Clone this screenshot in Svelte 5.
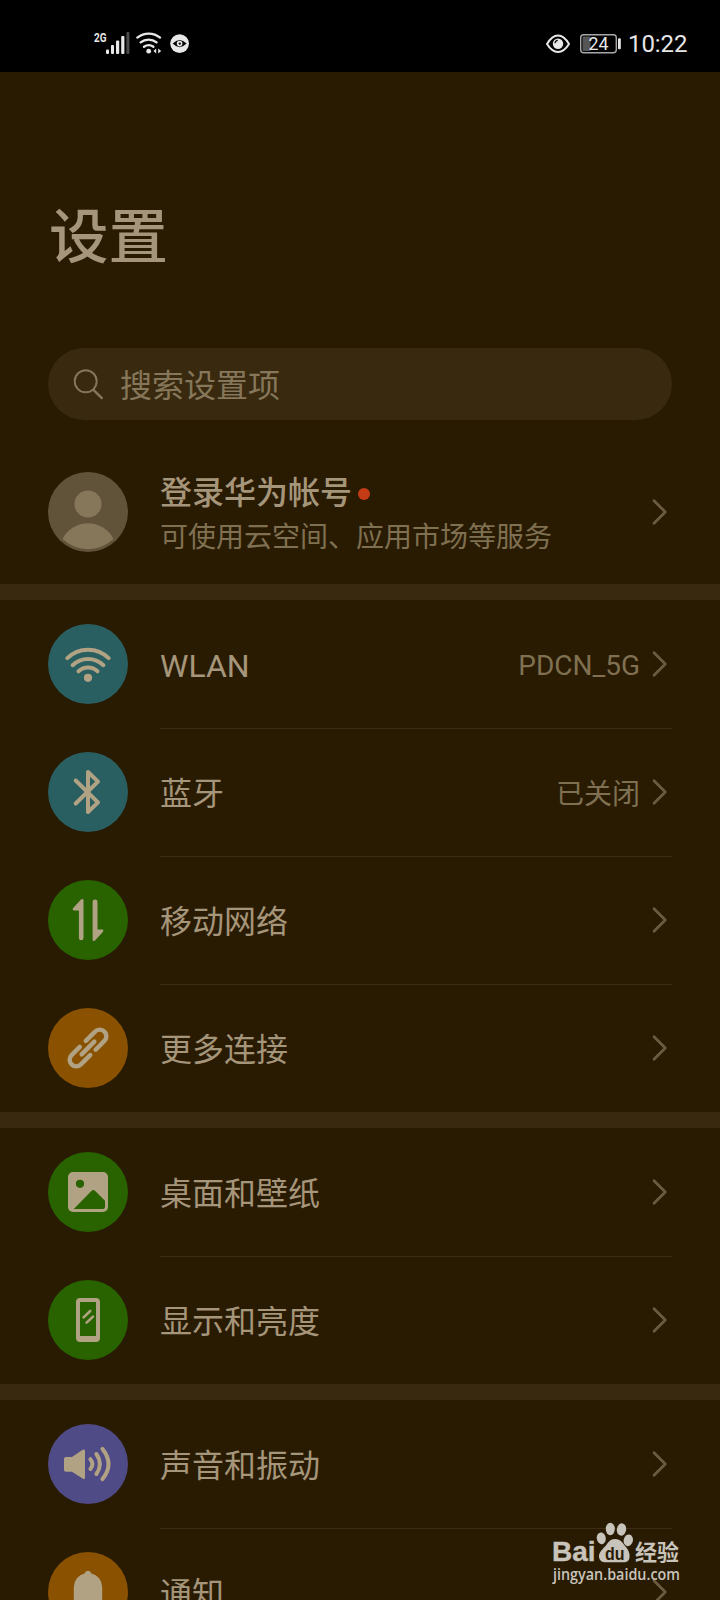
<script>
  const groups = [
    [
      { label: 'WLAN', value: 'PDCN_5G', icon: 'wifi', tone: 'teal' },
      { label: '蓝牙', value: '已关闭', icon: 'bluetooth', tone: 'teal' },
      { label: '移动网络', icon: 'data', tone: 'green' },
      { label: '更多连接', icon: 'link', tone: 'orange' }
    ],
    [
      { label: '桌面和壁纸', icon: 'image', tone: 'green' },
      { label: '显示和亮度', icon: 'display', tone: 'green' }
    ],
    [
      { label: '声音和振动', icon: 'sound', tone: 'purple' },
      { label: '通知', icon: 'bell', tone: 'orange' }
    ]
  ];
</script>

{#snippet chevron()}
  <svg class="chevron" width="16" height="28" viewBox="0 0 16 28"><path d="M2 2.7 13.3 14 2 25.3" /></svg>
{/snippet}

<div class="screen">
  <header class="status">
    <svg class="left" width="100" height="30" viewBox="90 28 100 30">
      <text x="94" y="42" font-size="13.5" font-weight="700" textLength="12.5" lengthAdjust="spacingAndGlyphs">2G</text>
      <rect x="106" y="49.5" width="3" height="4.5" rx="1" />
      <rect x="111" y="45" width="3" height="9" rx="1" />
      <rect x="116" y="40.5" width="3.2" height="13.5" rx="1" />
      <rect x="121.2" y="36" width="3.2" height="18" rx="1" />
      <rect x="126.4" y="32" width="3" height="22" rx="1" fill="#4a4a4a" />
      <g fill="none" stroke="#e8e8e8" stroke-width="2.3" stroke-linecap="round">
        <path d="M137.3 37.6a18 18 0 0 1 22.8 0M140.6 42.4a13 13 0 0 1 16 0M144 46.8a8 8 0 0 1 9.4 0" />
      </g>
      <circle cx="148.7" cy="51.2" r="2.4" />
      <path d="M156.2 48.5v5l-2.8-2.5zM158.2 48.5v5l3-2.5z" />
      <circle cx="179.6" cy="43.6" r="9.4" />
      <path d="M172.6 43.6q7-7.2 14 0q-7 7.2-14 0z" fill="#050505" />
      <circle cx="179.6" cy="43.6" r="2.8" />
      <circle cx="179.8" cy="43.6" r="1.2" fill="#111" />
    </svg>
    <div class="right">
      <svg width="26" height="22" viewBox="545 33 26 22">
        <path d="M547 44Q552 35.5 558 35.5T569 44Q564 52 558 52T547 44z" fill="none" stroke="#e8e8e8" stroke-width="2" stroke-linejoin="round" />
        <circle cx="558" cy="43.8" r="5.2" />
        <path d="M555 43.2q.3-2.6 2.8-2.9" fill="none" stroke="#111" stroke-width="1.3" />
      </svg>
      <svg width="42" height="22" viewBox="579 33 42 22">
        <rect x="580.7" y="34.7" width="35.6" height="18" rx="3" fill="none" stroke="#a8a8a8" stroke-width="1.4" />
        <rect x="582.5" y="36.5" width="8" height="14.4" rx="1" fill="#555" />
        <rect x="618" y="38.3" width="2.8" height="11" rx="1" />
        <text x="598.6" y="50.4" font-size="19" text-anchor="middle" textLength="20" lengthAdjust="spacingAndGlyphs">24</text>
      </svg>
      <time>10:22</time>
    </div>
  </header>

  <h1>设置</h1>

  <div class="search">
    <svg width="32" height="32" viewBox="0 0 32 32"><circle cx="13.7" cy="13.3" r="11" /><path d="m21.5 21.8 8.3 8.3" stroke-width="2.4" /></svg>
    <span>搜索设置项</span>
  </div>

  <section class="account">
    <svg class="icon" viewBox="0 0 80 80">
      <circle cx="40" cy="40" r="40" fill="#61523a" />
      <circle cx="40" cy="32" r="13.6" fill="#86775a" />
      <path d="M14.5 67a28.5 28.5 0 0 1 51 0a37 37 0 0 1-51 0z" fill="#86775a" />
    </svg>
    <div class="who">
      <div class="name">登录华为帐号<i></i></div>
      <div class="hint">可使用云空间、应用市场等服务</div>
    </div>
    {@render chevron()}
  </section>

  {#each groups as rows}
    <div class="band"></div>
    <section>
      {#each rows as row}
        <div class="row">
          <svg class="icon {row.tone}" viewBox="0 0 80 80">
            <circle class="disc" cx="40" cy="40" r="40" />
            {#if row.icon === 'wifi'}
              <g class="line">
                <path d="M19.3 34.2a29.5 29.5 0 0 1 41.4 0M24.6 41.2a22 22 0 0 1 30.8 0M30.5 47.3a14 14 0 0 1 19 0" />
              </g>
              <circle cx="40" cy="53.8" r="4.1" />
            {:else if row.icon === 'bluetooth'}
              <path class="line" d="M27.7 28.5 50 50.4 40 60V20L50 29.6 27.7 51.5" />
            {:else if row.icon === 'data'}
              <path d="M35.5 20.3V58a2.3 2.3 0 0 1-4.6 0V30.5H26q-2.3-.4-.8-2.4L33 19.6q2.3-1.6 2.5.7z" />
              <path d="M44.6 59.7V22a2.4 2.4 0 0 1 4.9 0V49.5H54q2.3.4.8 2.4L47 60.4q-2.2 1.6-2.4-.7z" />
            {:else if row.icon === 'link'}
              <g class="line" transform="rotate(-45 40 40)">
                <path class="thick" d="M43.5 33.4H56.6a6.6 6.6 0 0 1 0 13.2H44.2M36.5 46.6H23.4a6.6 6.6 0 0 1 0-13.2H35M31 40H49" />
              </g>
            {:else if row.icon === 'image'}
              <rect x="20" y="20" width="40" height="40" rx="5" />
              <circle class="disc" cx="32" cy="31.8" r="4.1" />
              <path class="disc" d="M25.8 57 43.4 39Q45.3 37 47.2 39L57 48.7V55q0 2-2 2z" />
            {:else if row.icon === 'display'}
              <path fill-rule="evenodd" d="M32 18H48a4 4 0 0 1 4 4V58a4 4 0 0 1-4 4H32a4 4 0 0 1-4-4V22a4 4 0 0 1 4-4zM32 22V56H48V22z" />
              <path class="line thin" d="M35.6 37.4 42.2 31M38.6 42.6 45 36.6" />
            {:else if row.icon === 'sound'}
              <path d="M18 33H24L34.6 25.8Q37 24.6 37 27V53.6Q37 56 34.6 54.6L24 47.8H18Q16 47.8 16 46V34.8Q16 33 18 33z" />
              <path class="line" d="M42.4 35.2q4 4.8 0 9.8M48.4 30q7 10 0 20M54.5 24.9q12 15 0 30.2" />
            {:else}
              <path d="M36.6 21.4a3.5 3.5 0 0 1 6.8 0A14.2 14.2 0 0 1 54.2 35V60H25.8V35A14.2 14.2 0 0 1 36.6 21.4z" />
            {/if}
          </svg>
          <div class="content">
            <span class="label">{row.label}</span>
            {#if row.value}<span class="value">{row.value}</span>{/if}
            {@render chevron()}
          </div>
        </div>
      {/each}
    </section>
  {/each}

  <div class="watermark">
    <div class="brand">
      <span class="bai">Bai</span>
      <svg width="38" height="42" viewBox="0 0 38 42">
        <ellipse cx="5.3" cy="16.3" rx="4.5" ry="5.9" transform="rotate(-8 5.3 16.3)" />
        <ellipse cx="14.3" cy="7" rx="4.5" ry="6.2" />
        <ellipse cx="25.5" cy="7.5" rx="4.6" ry="6.2" transform="rotate(10 25.5 7.5)" />
        <ellipse cx="32.3" cy="18.3" rx="4.6" ry="5.9" transform="rotate(12 32.3 18.3)" />
        <path d="M19 17c6 0 7.5 4 10.500 7.500S34 31 33.500 35.500 29.500 40.500 26 40.300H11C6 40.700 3.500 38.500 3 35S5.500 28 9 24.500 13 17 19 17z" />
        <text x="9" y="37.5" textLength="19.5" lengthAdjust="spacingAndGlyphs">du</text>
      </svg>
      <span class="exp">经验</span>
    </div>
    <svg class="url" width="132" height="24" viewBox="0 0 132 24">
      <text x="1" y="16" textLength="127" lengthAdjust="spacingAndGlyphs">jingyan.baidu.com</text>
    </svg>
  </div>
</div>

<style>
  :global(body) { margin: 0; background: #291b02; }
  .screen {
    position: relative;
    width: 720px;
    height: 1600px;
    overflow: hidden;
    background: #291b02;
    color: #a5957a;
    font-family: Roboto, "Noto Sans CJK SC", sans-serif;
  }
  .status {
    display: flex;
    align-items: flex-start;
    justify-content: space-between;
    box-sizing: border-box;
    height: 72px;
    padding: 28px 32px 0 90px;
    background: #000;
    color: #e6e6e6;
    fill: #e8e8e8;
  }
  .right { display: flex; align-items: center; margin-top: 5px; height: 22px; }
  .right svg + svg { margin-left: 8px; }
  time { margin-left: 7px; font-size: 24px; line-height: 22px; width: 60px; letter-spacing: -0.1px; white-space: nowrap; }
  h1 {
    margin: 116px 0 0 49px;
    height: 88px;
    font: 500 59.5px/88px "Noto Sans CJK SC", sans-serif;
  }
  .search {
    display: flex;
    align-items: center;
    gap: 16px;
    height: 72px;
    box-sizing: border-box;
    margin: 72px 48px 0;
    padding-left: 24px;
    border-radius: 36px;
    background: #38290f;
    color: #86775a;
    font-size: 32px;
  }
  .search span { padding-bottom: 3px; }
  .search svg { fill: none; stroke: #86775a; stroke-width: 1.9; stroke-linecap: round; }
  .account { display: flex; align-items: center; height: 144px; margin-top: 20px; padding: 0 48px; box-sizing: border-box; }
  .who { flex: 1; margin-left: 32px; padding-top: 9px; }
  .name { display: flex; align-items: center; font-size: 32px; font-weight: 500; line-height: 43px; }
  .name i { width: 12px; height: 12px; margin-left: 6px; border-radius: 50%; background: #c43c16; }
  .hint { color: #7f7051; font-size: 28px; line-height: 46px; white-space: nowrap; }
  .chevron { flex: none; margin-right: 4px; fill: none; stroke: #6b5b3f; stroke-width: 2.7; stroke-linecap: round; stroke-linejoin: round; }
  .band { height: 16px; background: #38290f; }
  .row { display: flex; align-items: center; height: 128px; padding: 0 48px; }
  .icon { flex: none; width: 80px; height: 80px; fill: #b0a283; }
  .line { fill: none; stroke: #b0a283; stroke-width: 4; stroke-linecap: round; stroke-linejoin: round; }
  .thin { stroke-width: 2.6; }
  .thick { stroke-width: 4.4; }
  .teal .disc { fill: #295f60; }
  .green .disc { fill: #286300; }
  .orange .disc { fill: #8a5200; }
  .purple .disc { fill: #4f4b87; }
  .content {
    display: flex;
    align-items: center;
    flex: 1;
    height: 128px;
    margin-left: 32px;
    padding-bottom: 1px;
    box-sizing: border-box;
  }
  .row + .row .content { border-top: 1px solid #3c2d14; }
  .label { flex: 1; font-size: 32px; line-height: 48px; padding-top: 4px; }
  .value { margin-right: 12px; color: #7f7051; font-size: 28px; line-height: 42px; padding-top: 5px; }
  .row:first-child .value { padding-top: 4px; }
  .watermark {
    position: absolute;
    left: 552px;
    top: 1522px;
    color: #c8c3bb;
    fill: #c8c3bb;
  }
  .brand { display: flex; align-items: flex-end; height: 42px; }
  .bai { width: 44px; font: 700 28px/30px "Liberation Sans", sans-serif; height: 27px; -webkit-text-stroke: 0.4px #c8c3bb; }
  .brand svg { flex: none; }
  .brand text { font: 700 18.5px "Liberation Sans", sans-serif; fill: #291b02; }
  .exp { margin-left: 1px; font: 700 22px/30px "Noto Sans CJK SC", sans-serif; height: 29px; }
  .url { display: block; }
  .url text { font: 600 16.5px "Open Sans", sans-serif; }
</style>
